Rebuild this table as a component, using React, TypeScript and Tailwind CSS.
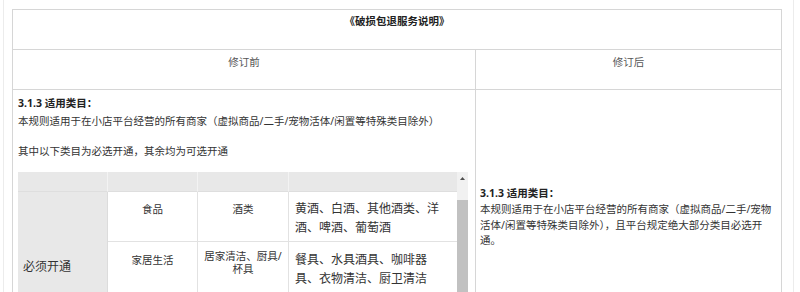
import React from "react";

const rows = [
  {
    group: "食品",
    sub: "酒类",
    items: "黄酒、白酒、其他酒类、洋酒、啤酒、葡萄酒",
  },
  {
    group: "家居生活",
    sub: "居家清洁、厨具/杯具",
    items: "餐具、水具酒具、咖啡器具、衣物清洁、厨卫清洁",
  },
];

const ScopeTable = () => {
  return (
    <div className="flex w-[450px]">
      <div className="grid w-[439px] grid-cols-[90px_90px_91px_168px] grid-rows-[20px_50px_70px] text-[#333]">
        {/* header */}
        <div className="border-r border-b border-[#f3f3f3] border-b-[#dedede] bg-[#e8e8e8]" />
        <div className="border-r border-b border-[#f3f3f3] border-b-[#dedede] bg-[#e8e8e8]" />
        <div className="border-r border-b border-[#f3f3f3] border-b-[#dedede] bg-[#e8e8e8]" />
        <div className="border-b border-[#dedede] bg-[#e8e8e8]" />

        {/* category column */}
        <div className="row-span-2 border-r border-[#dcdcdc] bg-[#e8e8e8] pt-[66px] pl-[5px] text-[12px] leading-[18px]">
          必须开通
        </div>

        {/* row 1 */}
        <div className="border-r border-b border-[#e2e2e2] pt-[10px] text-center leading-[15px]">
          {rows[0].group}
        </div>
        <div className="border-r border-b border-[#e2e2e2] pt-[10px] text-center leading-[15px]">
          {rows[0].sub}
        </div>
        <div className="border-b border-[#e2e2e2] pt-[7px] pr-[12px] pl-[6px] text-[12px] leading-[19px]">
          {rows[0].items}
        </div>

        {/* row 2 */}
        <div className="border-r border-[#e2e2e2] pt-[11px] text-center leading-[15px]">
          {rows[1].group}
        </div>
        <div className="border-r border-[#e2e2e2] px-[4px] pt-[8px] text-center leading-[13px]">
          {rows[1].sub}
        </div>
        <div className="pt-[8px] pr-[12px] pl-[6px] text-[12px] leading-[19px]">
          {rows[1].items}
        </div>
      </div>

      {/* scrollbar */}
      <div className="flex w-[11px] flex-col bg-[#f1f1f1]">
        <svg width="11" height="28" viewBox="0 0 11 28">
          <polygon points="3,8 5.5,5 8,8" fill="#505050" />
        </svg>
        <div className="flex-1 bg-[#c1c1c1]" />
      </div>
    </div>
  );
};

const App = () => {
  return (
    <div className="h-[292px] w-[800px] overflow-hidden bg-white font-['Noto_Sans','Noto_Sans_CJK_SC',sans-serif] text-[10.5px] text-[#333]">
      <div className="ml-[3px] h-full w-[791px] border-x border-[#ececec] pt-[9px] pl-[8px]">
        <div className="h-[300px] w-[770px] border border-b-0 border-[#d6d6d6]">
          <div className="h-[40px] border-b border-[#d6d6d6] pt-[4px] text-center leading-[15px] font-bold text-[#222]">
            《破损包退服务说明》
          </div>

          <div className="flex h-[40px] border-b border-[#d6d6d6] text-[#555]">
            <div className="w-[463px] border-r border-[#d6d6d6] pt-[5px] text-center leading-[15px]">
              修订前
            </div>
            <div className="flex-1 pt-[5px] text-center leading-[15px]">
              修订后
            </div>
          </div>

          <div className="flex h-[220px]">
            <div className="w-[463px] border-r border-[#d6d6d6] pt-[4px] pl-[5px]">
              <div className="leading-[18px] font-bold text-[#222]">3.1.3 适用类目：</div>
              <p className="leading-[18px]">
                本规则适用于在小店平台经营的所有商家（虚拟商品/二手/宠物活体/闲置等特殊类目除外）
              </p>
              <p className="mt-[12px] leading-[18px]">
                其中以下类目为必选开通，其余均为可选开通
              </p>
              <div className="mt-[12px]">
                <ScopeTable />
              </div>
            </div>

            <div className="flex-1 pt-[94px] pr-[4px] pl-[4px]">
              <div className="leading-[18px] font-bold text-[#222]">3.1.3 适用类目：</div>
              <p className="leading-[15.5px]">
                本规则适用于在小店平台经营的所有商家（虚拟商品/二手/宠物活体/闲置等特殊类目除外），且平台规定绝大部分类目必选开通。
              </p>
            </div>
          </div>
        </div>
      </div>
    </div>
  );
};

export default App;
